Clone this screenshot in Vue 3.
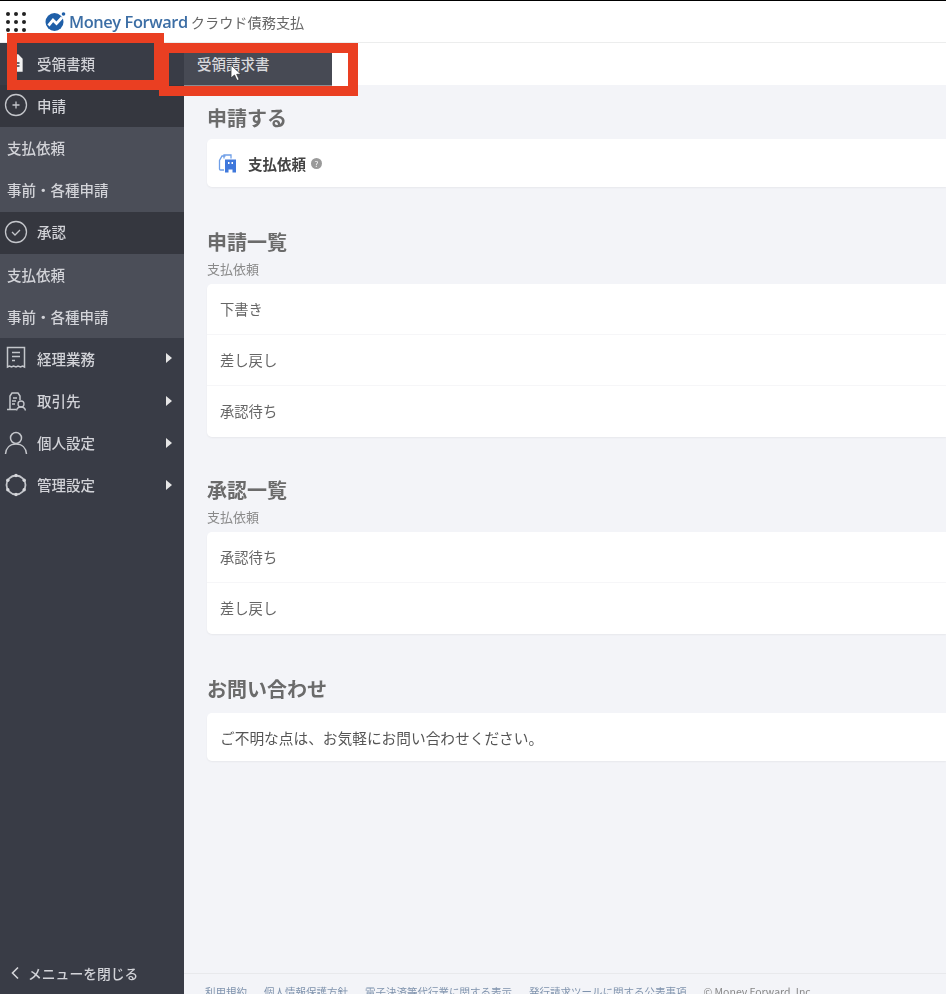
<template>
  <div class="app">
    <div class="page">
      <header class="top-bar">
        <div class="apps-grid">
          <span v-for="i in 9" :key="i" class="dot"></span>
        </div>
        <div class="logo">
          <svg class="logo-mark" width="21" height="21" viewBox="0 0 21 21">
            <circle cx="9.5" cy="11" r="9" fill="#1f5fa8" />
            <path d="M3.500 14.500 L8 9 L11.500 12.500 L17 6.500" fill="none" stroke="#fff" stroke-width="2.800" />
            <circle cx="18.500" cy="3" r="1.800" fill="#1f5fa8" />
          </svg>
          <span class="logo-name">Money Forward</span>
          <span class="logo-product">クラウド債務支払</span>
        </div>
      </header>

      <div class="body-row">
        <aside class="sidebar">
          <nav class="menu">
            <div
              v-for="item in menu"
              :key="item.id"
              class="menu-item"
              :class="{ sub: item.sub, head: item.head }"
            >
              <svg v-if="item.icon" class="menu-icon" width="24" height="24" viewBox="0 0 24 24" fill="none" stroke="#c4c6cb" stroke-width="1.300">
                <template v-if="item.icon === 'doc'">
                  <path d="M7 4h7l4 4v12H7z" fill="#f2f2f2" stroke="#f2f2f2" />
                  <path d="M9.500 12h6M9.500 15h6" stroke="#393c46" />
                </template>
                <template v-else-if="item.icon === 'plus'">
                  <circle cx="12" cy="12" r="10.500" />
                  <path d="M12 8.500v7M8.500 12h7" />
                </template>
                <template v-else-if="item.icon === 'check'">
                  <circle cx="12" cy="12" r="10.500" />
                  <path d="M8 12l3 3 5-5" />
                </template>
                <template v-else-if="item.icon === 'ledger'">
                  <path d="M3.500 1.500h17v19.500l-2-1-2 1-2.500-1-2 1-2.500-1-2 1-2-1-2 1z" stroke-width="1.500" />
                  <path d="M8 6.500h8M8 10.500h8M8 14.500h3" stroke-width="1.500" />
                </template>
                <template v-else-if="item.icon === 'partner'">
                  <path d="M6 20V7l2-3h6l2 3v4" stroke-width="1.500" />
                  <path d="M3 20.500h9M9 9h4M8 12h4M8 15h3" />
                  <circle cx="17" cy="15" r="3" />
                  <path d="M12.500 21.500c.5-2.500 2-3.500 4.500-3.500s4 1 4.500 3.500" />
                </template>
                <template v-else-if="item.icon === 'person'">
                  <circle cx="12" cy="7" r="5.500" stroke-width="1.500" />
                  <path d="M1.500 23c.5-6 4.500-10 10.500-10s10 4 10.500 10" stroke-width="1.500" />
                </template>
                <template v-else-if="item.icon === 'gear'">
                  <circle cx="12" cy="12" r="9.500" stroke-width="1.800" />
                  <g fill="#d5d6da" stroke="none">
                    <circle cx="12" cy="2.500" r="1.700" />
                    <circle cx="12" cy="21.500" r="1.700" />
                    <circle cx="3.800" cy="7.200" r="1.700" />
                    <circle cx="20.200" cy="7.200" r="1.700" />
                    <circle cx="3.800" cy="16.800" r="1.700" />
                    <circle cx="20.200" cy="16.800" r="1.700" />
                  </g>
                </template>
              </svg>
              <span class="menu-label">{{ item.label }}</span>
              <span v-if="item.arrow" class="menu-arrow"></span>
            </div>
          </nav>
          <div class="menu-close">
            <svg width="12" height="14" viewBox="0 0 12 14" fill="none" stroke="#d5d6da" stroke-width="1.600">
              <path d="M9 1.500L3.500 7 9 12.500" />
            </svg>
            <span>メニューを閉じる</span>
          </div>
        </aside>

        <main class="content">
          <div class="sub-bar"></div>
          <div class="sections">
            <section class="section first">
              <h2>申請する</h2>
              <div class="card">
                <div class="request-row">
                  <svg width="20" height="22" viewBox="0 0 20 22" fill="none">
                    <path d="M6 18H2.500a1 1 0 0 1-1-1V8.500L4 4h3.500" stroke="#6f9fe8" stroke-width="1.300" />
                    <path d="M6 6.500V3h7v3.500" stroke="#6f9fe8" stroke-width="1.300" />
                    <path d="M7 7.500h11v13h-3.500v-3h-4v3H7z" fill="#3f78dc" />
                    <path d="M10 10h1.500v2H10zM13.500 10H15v2h-1.500z" fill="#fff" />
                  </svg>
                  <strong>支払依頼</strong>
                  <span class="help-dot">?</span>
                </div>
              </div>
            </section>

            <section v-for="group in groups" :key="group.title" class="section">
              <h2>{{ group.title }}</h2>
              <p class="caption">{{ group.caption }}</p>
              <div class="card">
                <div v-for="row in group.rows" :key="row" class="list-row">{{ row }}</div>
              </div>
            </section>

            <section class="section contact">
              <h2>お問い合わせ</h2>
              <div class="card">
                <div class="contact-row">ご不明な点は、お気軽にお問い合わせください。</div>
              </div>
            </section>
          </div>

          <footer class="page-footer">
            <span>利用規約</span>
            <span>個人情報保護方針</span>
            <span>電子決済等代行業に関する表示</span>
            <span>発行請求ツールに関する公表事項</span>
            <span class="copy">© Money Forward, Inc.</span>
          </footer>
        </main>
      </div>

      <!-- hover flyout -->
      <div class="flyout">
        <span>受領請求書</span>
        <svg class="cursor" width="14" height="18" viewBox="0 0 14 18">
          <path d="M1 1v13l3.500-3 2.500 5.500 2.200-1-2.500-5.200H11z" fill="#fff" stroke="#333" stroke-width="0.800" />
        </svg>
      </div>
      <div class="flyout-gap"></div>
    </div>

    <!-- red annotation boxes -->
    <div class="mark mark-a"></div>
    <div class="mark mark-b"></div>
  </div>
</template>

<script setup>
const menu = [
  { id: 1, label: '受領書類', icon: 'doc' },
  { id: 2, label: '申請', icon: 'plus', head: true },
  { id: 3, label: '支払依頼', sub: true },
  { id: 4, label: '事前・各種申請', sub: true },
  { id: 5, label: '承認', icon: 'check', head: true },
  { id: 6, label: '支払依頼', sub: true },
  { id: 7, label: '事前・各種申請', sub: true },
  { id: 8, label: '経理業務', icon: 'ledger', arrow: true },
  { id: 9, label: '取引先', icon: 'partner', arrow: true },
  { id: 10, label: '個人設定', icon: 'person', arrow: true },
  { id: 11, label: '管理設定', icon: 'gear', arrow: true },
]

const groups = [
  { title: '申請一覧', caption: '支払依頼', rows: ['下書き', '差し戻し', '承認待ち'] },
  { title: '承認一覧', caption: '支払依頼', rows: ['承認待ち', '差し戻し'] },
]
</script>

<style>
html, body { margin: 0; padding: 0; background: #f3f4f8; overflow: hidden; }
</style>

<style scoped>
* { box-sizing: border-box; }

.app {
  position: relative;
  width: 946px;
  height: 994px;
  overflow: hidden;
  font-family: "Noto Sans CJK JP", "Noto Sans", sans-serif;
  color: #555;
  background: #f3f4f8;
  border-top: 1px solid #000;
}

/* the reference is a soft video frame */
.page {
  height: 100%;
  display: flex;
  flex-direction: column;
  filter: blur(0.7px);
}

.top-bar {
  height: 42px;
  flex: none;
  background: #fff;
  display: flex;
  align-items: center;
  padding-left: 6px;
  gap: 19px;
  border-bottom: 1px solid #eceded;
}

.apps-grid {
  display: grid;
  grid-template-columns: repeat(3, 4px);
  gap: 4px;
}
.dot { width: 4px; height: 4px; border-radius: 50%; background: #222; }

.logo { display: flex; align-items: center; }
.logo-mark { margin-right: 3px; }
.logo-name {
  font-family: "Open Sans", sans-serif;
  font-size: 16.400px;
  font-weight: 600;
  letter-spacing: -0.400px;
  color: #3c6ea5;
  white-space: nowrap;
}
.logo-product { font-size: 14.200px; color: #666; margin-left: 3px; white-space: nowrap; }

.body-row { flex: 1; display: flex; min-height: 0; }

.sidebar {
  width: 184px;
  flex: none;
  background: #393c46;
  display: flex;
  flex-direction: column;
  justify-content: space-between;
  color: #d2d3d8;
}

.menu-item {
  height: 42.200px;
  display: flex;
  align-items: center;
  padding: 0 0 2px 4px;
  font-size: 14.500px;
  font-weight: 500;
  position: relative;
}
.menu-item.head { background: #35373f; }
.menu-item.sub { background: #4b4e58; padding-left: 7px; }
.menu-icon { flex: none; margin-right: 9px; }
.menu-arrow {
  position: absolute;
  right: 12px;
  top: 50%;
  margin-top: -6px;
  border-left: 6px solid #e6e6e6;
  border-top: 5px solid transparent;
  border-bottom: 5px solid transparent;
}

.menu-close {
  height: 40px;
  display: flex;
  align-items: center;
  gap: 7px;
  padding: 0 0 4px 9px;
  font-size: 13.800px;
  font-weight: 500;
  margin-bottom: -1px;
}

.content {
  flex: 1;
  min-width: 0;
  display: flex;
  flex-direction: column;
  justify-content: space-between;
}

.sub-bar { height: 42px; flex: none; background: #fff; }

.sections { flex: 1; padding-left: 23px; }

.section.first { margin-top: 19px; }
.section.first + .section { margin-top: 41px; }
.section + .section { margin-top: 39px; }
.section + .section.contact { margin-top: 41px; }

h2 {
  margin: 0;
  font-size: 20px;
  font-weight: 700;
  line-height: 28px;
  color: #6b6b6b;
}

.caption {
  margin: 4px 0 0;
  font-size: 13px;
  line-height: 18px;
  color: #8a8a8a;
}

.section h2 + .card { margin-top: 7px; }
.section.contact h2 + .card { margin-top: 10px; }
.caption + .card { margin-top: 6px; }

.card {
  background: #fff;
  border-radius: 5px 0 0 5px;
  box-shadow: 0 1px 2px rgba(0, 0, 0, 0.05);
}

.request-row {
  height: 48px;
  display: flex;
  align-items: center;
  padding-left: 11px;
  font-size: 14.500px;
  color: #444;
}
.request-row strong { margin-left: 10px; font-weight: 700; }
.help-dot {
  width: 11px;
  height: 11px;
  margin-left: 5px;
  border-radius: 50%;
  background: #9a9a9a;
  color: #fff;
  font-size: 8px;
  line-height: 11px;
  text-align: center;
}

.list-row {
  height: 51px;
  display: flex;
  align-items: center;
  padding: 0 0 2px 13px;
  font-size: 14.300px;
  color: #666;
  border-bottom: 1px solid #f6f6f8;
}
.list-row:last-child { border-bottom: none; }

.contact-row {
  height: 48px;
  display: flex;
  align-items: center;
  padding-left: 13px;
  font-size: 14.700px;
  color: #555;
}

.page-footer {
  height: 21px;
  flex: none;
  border-top: 1px solid #e8e9ec;
  padding: 11px 0 0 21px;
  display: flex;
  gap: 17px;
  font-size: 10.500px;
  line-height: 14px;
  color: #7f93ad;
  white-space: nowrap;
  overflow: hidden;
}
.page-footer .copy { color: #888; }

.flyout {
  position: absolute;
  left: 184px;
  top: 42px;
  width: 148px;
  height: 43px;
  background: #474a54;
  border-bottom: 1px solid #8c8d92;
  color: #d8d9dc;
  font-size: 14.500px;
  font-weight: 500;
  display: flex;
  align-items: center;
  padding: 0 0 2px 13px;
}
.cursor { position: absolute; left: 46px; top: 21px; }

.flyout-gap {
  position: absolute;
  left: 332px;
  top: 52px;
  width: 16px;
  height: 33px;
  background: #fff;
}

.mark {
  position: absolute;
  border: 10px solid #ea3f22;
  pointer-events: none;
}
.mark-a { left: 7px; top: 32px; width: 157px; height: 57px; }
.mark-b { left: 159px; top: 42px; width: 199px; height: 53px; }
</style>
